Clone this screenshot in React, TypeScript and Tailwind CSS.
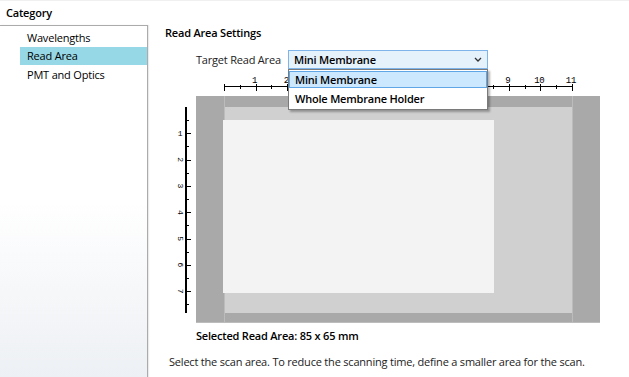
import React from "react";

// scan area drawing, page coords shifted by the svg origin
const OX = 166;
const OY = 72;
const HU = (573 - 225) / 11; // px per cm, top ruler
const VU = 26.3; // px per cm, left ruler

// labels 3..8 sit under the open dropdown
const TOP_LABELS = [1, 2, 9, 10, 11];

function ScanArea() {
  const hx = (v: number) => v - OX;
  const hy = (v: number) => v - OY;

  const topTicks: React.ReactNode[] = [];
  for (let i = 0; i <= 22; i++) {
    const x = Math.round(hx(225 + (i * HU) / 2)) + 0.5;
    const major = i % 2 === 0;
    topTicks.push(
      <line
        key={"t" + i}
        x1={x}
        x2={x}
        y1={hy(major ? 84 : 85)}
        y2={hy(major ? 91 : 89)}
        stroke="#000"
        strokeWidth={1}
      />
    );
  }

  const leftTicks: React.ReactNode[] = [];
  for (let i = 1; i <= 15; i++) {
    const y = Math.round(hy(107 + (i * VU) / 2)) + 0.5;
    const major = i % 2 === 0;
    leftTicks.push(
      <line
        key={"l" + i}
        x1={hx(187)}
        x2={hx(major ? 192 : 190)}
        y1={y}
        y2={y}
        stroke="#000"
        strokeWidth={1}
      />
    );
  }

  return (
    <svg width={440} height={254} viewBox="0 0 440 254" className="block">
      {/* plate */}
      <rect x={hx(197)} y={hy(96)} width={404} height={227} fill="#a9a9a9" />
      <rect x={hx(225)} y={hy(107)} width={348} height={206} fill="#d0d0d0" />
      <line x1={hx(225.5)} x2={hx(225.5)} y1={hy(96)} y2={hy(323)} stroke="#bcbcbc" />
      <line x1={hx(573.5)} x2={hx(573.5)} y1={hy(96)} y2={hy(323)} stroke="#bcbcbc" />
      <line x1={hx(197)} x2={hx(601)} y1={hy(322.5)} y2={hy(322.5)} stroke="#bcbcbc" />
      <rect x={hx(224)} y={hy(120)} width={271} height={173} fill="#f3f3f3" />

      {/* top ruler */}
      <line x1={hx(225)} x2={hx(573)} y1={hy(86.5)} y2={hy(86.5)} stroke="#000" />
      {topTicks}
      {TOP_LABELS.map((n) => (
        <text
          key={"tl" + n}
          x={hx(225 + n * HU) - 1}
          y={hy(83)}
          fontSize={9}
          textAnchor="middle"
          fontFamily="'Liberation Mono', monospace"
          fill="#000"
        >
          {n}
        </text>
      ))}

      {/* left ruler */}
      <rect x={hx(186)} y={hy(107)} width={2} height={206} fill="#000" />
      {leftTicks}
      {Array.from({ length: 7 }, (_, k) => {
        const y = hy(107 + (k + 1) * VU);
        const x = hx(181);
        return (
          <text
            key={"ll" + k}
            x={x}
            y={y}
            fontSize={8}
            textAnchor="middle"
            dominantBaseline="central"
            fontFamily="'Liberation Mono', monospace"
            fill="#000"
            transform={k === 0 ? undefined : `rotate(90 ${x} ${y})`}
          >
            {k + 1}
          </text>
        );
      })}
    </svg>
  );
}

function Chevron() {
  return (
    <svg width="8" height="5" viewBox="0 0 8 5">
      <path d="M1 1 L4 4 L7 1" fill="none" stroke="#333" strokeWidth="1.3" />
    </svg>
  );
}

export default function App() {
  return (
    <div
      className="w-[629px] h-[377px] overflow-hidden bg-white text-[11px] leading-[16px] tracking-[-0.2px] text-black border-t border-[#f0f0f0]"
      style={{ fontFamily: "'Open Sans', 'Noto Sans', sans-serif" }}
    >
      <div className="h-[24px] flex items-center pl-[6px] font-semibold">Category</div>
      <div className="flex h-[352px]">
        <div className="w-[148px] shrink-0 border-t border-r border-[#ababab] bg-gradient-to-b from-white via-white to-[#edf0f4] shadow-[1px_0_1px_rgba(0,0,0,0.08)] pt-[3px]">
          <div className="h-[18px] flex items-center ml-[20px] pl-[7px]">Wavelengths</div>
          <div className="h-[18px] flex items-center ml-[20px] pl-[7px] bg-[#97d8e7]">Read Area</div>
          <div className="h-[18px] flex items-center ml-[20px] pl-[7px] mt-px">PMT and Optics</div>
        </div>

        <div className="relative flex-1 pl-[17px]">
          <div className="font-semibold h-[16px]">Read Area Settings</div>

          <div className="flex items-center mt-[9px] h-[19px]">
            <div className="ml-[31px] w-[92px] whitespace-nowrap text-[#222]">Target Read Area</div>
            <div className="w-[200px] h-[19px] border border-[#7eb4ea] bg-[#e5f1fb] flex items-center justify-between pl-[5px] pr-[5px] font-semibold">
              <span>Mini Membrane</span>
              <Chevron />
            </div>
          </div>

          {/* open dropdown list */}
          <div className="absolute left-[140px] top-[44px] w-[200px] bg-white border border-[#7a7a7a] shadow-[2px_2px_2px_rgba(0,0,0,0.3)] font-semibold py-px">
            <div className="h-[17px] flex items-center pl-[5px] bg-[#cce8ff] border border-[#5ea6e6]">Mini Membrane</div>
            <div className="h-[19px] flex items-center pl-[6px] mt-[1px]">Whole Membrane Holder</div>
          </div>

          <div className="mt-[3px]">
            <ScanArea />
          </div>

          <div className="mt-[2px] ml-[31px] font-semibold h-[16px]">Selected Read Area: 85 x 65 mm</div>
          <div className="mt-[10px] ml-[4px] whitespace-nowrap text-[#222]">
            Select the scan area. To reduce the scanning time, define a smaller area for the scan.
          </div>
        </div>
      </div>
    </div>
  );
}
